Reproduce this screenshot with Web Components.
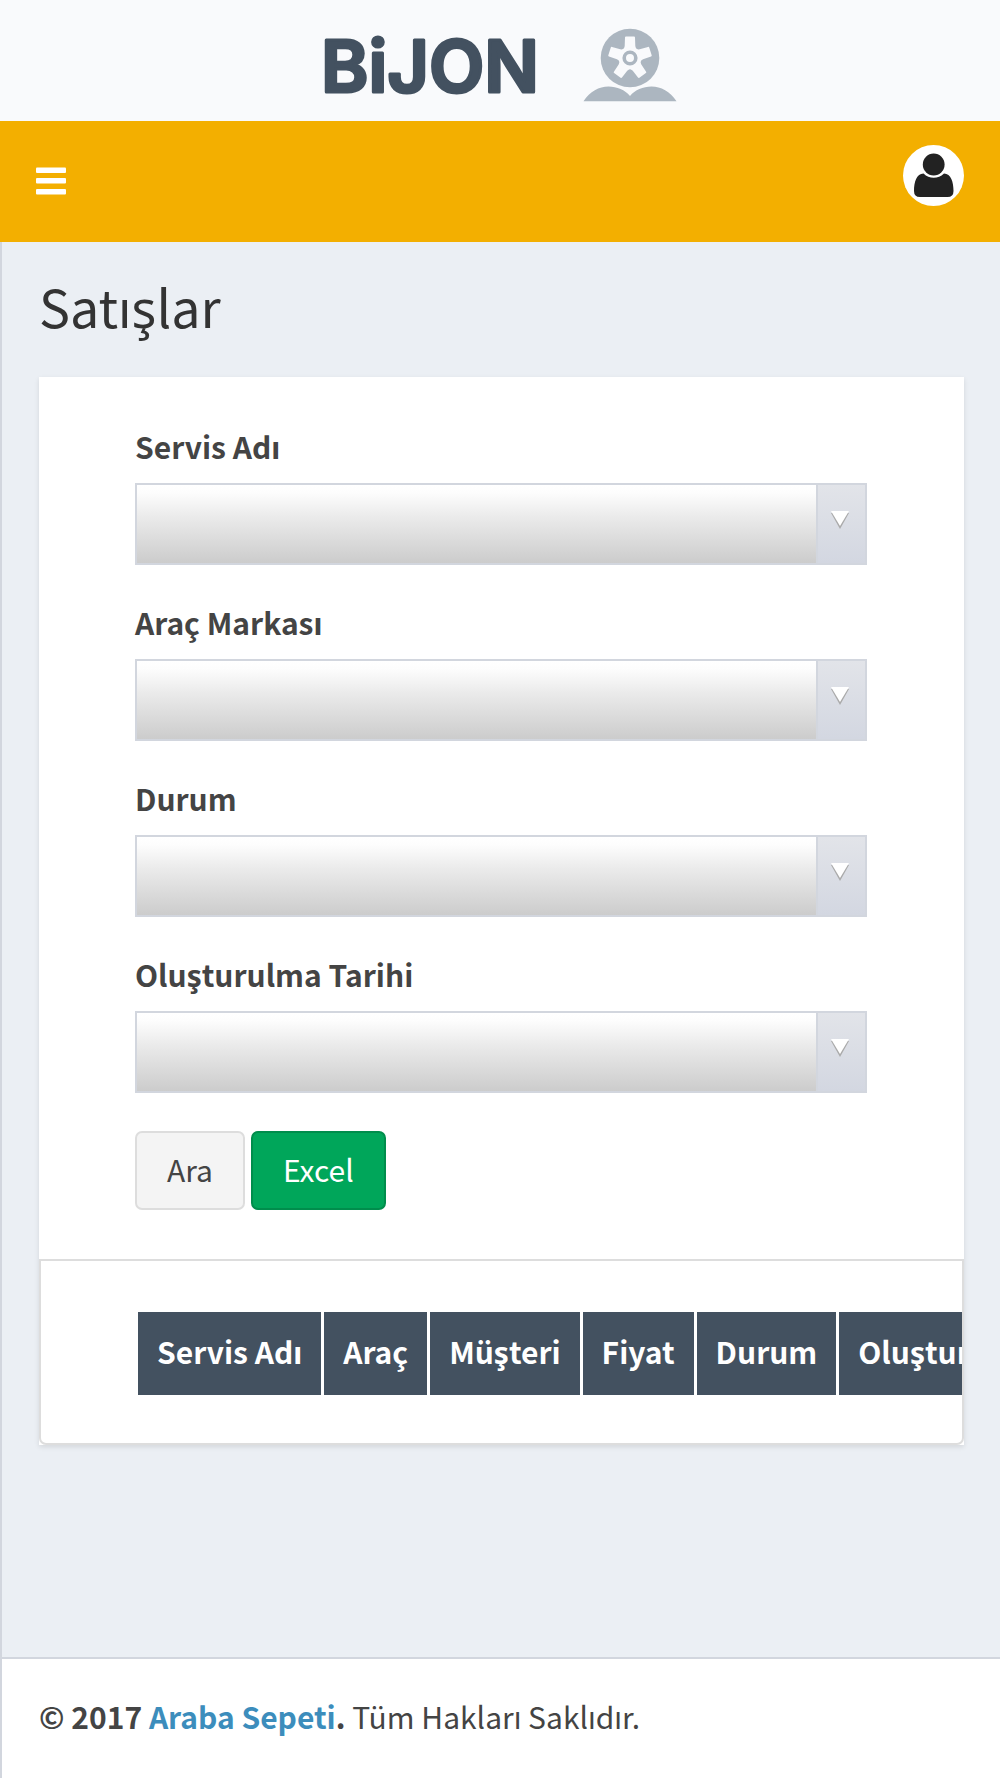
<!DOCTYPE html>
<html lang="tr">
<head>
<meta charset="utf-8">
<meta name="viewport" content="width=device-width, initial-scale=1">
<title>Satışlar</title>
<style>
  html, body { margin: 0; }
  body {
    --line: #d2d6de;
    --slate: #435160;
    font: 30px/43px "Noto Sans CJK SC", "Noto Sans", sans-serif;
    color: #444;
    background: #ebeff4;
  }
</style>
</head>
<body>
<sales-app></sales-app>
<script>
const define = (name, html, setup) => customElements.define(name, class extends HTMLElement {
  constructor() {
    super();
    const root = this.attachShadow({ mode: "open" });
    root.innerHTML = "<style>*{box-sizing:border-box}:host{display:block;box-sizing:border-box}</style>" + html;
    if (setup) setup(this, root);
  }
});

define("brand-logo", `
  <style>
    :host { background: #f9fafc; }
    a { display: flex; justify-content: center; height: 121px; }
    svg { width: 360px; height: 121px; display: block; }
    text { font: 600 72px Inter, sans-serif; fill: var(--slate); stroke: var(--slate); stroke-width: 3px; stroke-linejoin: round; }
  </style>
  <a href="#" aria-label="BiJON">
    <svg viewBox="320 0 360 121">
      <text x="321" y="92">BiJON</text>
      <g fill="#acb6c0">
        <circle cx="630" cy="58" r="29.3"/>
        <path d="M583.500 101.300C590 91.500 599 86.500 608.500 86.500C617 86.500 625 90 630 96C635 90 643 86.500 651.500 86.500C661 86.500 670 91.500 676.500 101.300Z"/>
      </g>
      <g fill="#f9fafc">
        <path id="spoke" d="M630 58L619 50Q624 51 624.700 46L625 37.500Q625 36.500 626 36.500H634Q635 36.500 635 37.500L635.300 46Q636 51 641 50Z"/>
        <use href="#spoke" transform="rotate(72 630 58)"/>
        <use href="#spoke" transform="rotate(144 630 58)"/>
        <use href="#spoke" transform="rotate(216 630 58)"/>
        <use href="#spoke" transform="rotate(288 630 58)"/>
        <circle cx="630" cy="58" r="10"/>
      </g>
      <circle cx="630" cy="58" r="5.800" fill="none" stroke="#acb6c0" stroke-width="3.600"/>
    </svg>
  </a>`);

define("top-bar", `
  <style>
    :host { background: #f3af00; height: 121px; }
    nav { display: flex; justify-content: space-between; align-items: flex-start; padding: 24px 36px; }
    button { border: 0; padding: 0; background: none; cursor: pointer; }
    svg { display: block; }
    .menu { padding: 22px 0; }
  </style>
  <nav>
    <button class="menu" aria-label="Menü">
      <svg width="30" height="28" fill="#fff"><rect y="0.500" width="30" height="5.500" rx="1"/><rect y="11" width="30" height="5.500" rx="1"/><rect y="22" width="30" height="5.500" rx="1"/></svg>
    </button>
    <button aria-label="Hesap">
      <svg width="61" height="61" viewBox="0 0 61 61"><circle cx="30.500" cy="30.500" r="30.500" fill="#fff"/>
      <g fill="#222"><circle cx="30.700" cy="19.500" r="10.900"/>
      <path d="M20.500 28.500Q25 32.800 30.700 32.800T41 28.500C48 28.500 50.500 37 50.500 46Q50.500 52 44.500 52H17Q11 52 11 46C11 37 13.500 28.500 20.500 28.500Z"/></g></svg>
    </button>
  </nav>`);

define("select-field", `
  <style>
    :host { margin-bottom: 36px; }
    label { display: block; font-weight: 700; margin-bottom: 15px; }
    .control { display: grid; grid-template-columns: 1fr 51px; }
    select {
      grid-area: 1 / 1 / 2 / 3; appearance: none; width: 100%; height: 82px; margin: 0;
      padding: 0 60px 0 12px; border: 2px solid var(--line); border-radius: 0;
      font: inherit; color: inherit; background: linear-gradient(#fff, #fdfdfd 10%, #ebebeb 40%, #ccc);
    }
    .arrow {
      grid-area: 1 / 2; display: flex; align-items: flex-start; justify-content: center;
      padding-top: 26px; border: 2px solid var(--line); pointer-events: none;
      background: linear-gradient(#e2e4e9, #d3d7e1);
    }
    svg { display: block; margin-right: 4px; }
  </style>
  <label for="choice"><slot></slot></label>
  <div class="control">
    <select id="choice"><option></option></select>
    <span class="arrow"><svg width="18" height="18"><path d="M0 2H18L9 18Z" fill="#aaa"/><path d="M0 0H18L9 15Z" fill="#fff"/></svg></span>
  </div>`);

define("action-button", `
  <style>
    :host { display: inline-block; }
    button {
      font: inherit; color: #444; background: #f4f4f4; border: 2px solid #ddd;
      border-radius: 7px; padding: 15px 30px 17px; cursor: pointer; display: block;
    }
    :host([kind="success"]) button { color: #fff; background: #00a65a; border-color: #008d4c; }
  </style>
  <button type="button"><slot></slot></button>`);

define("filter-form", `
  <style>
    :host { padding: 48px 97px 49px 96px; }
    .actions { display: flex; gap: 6px; padding-top: 2px; }
  </style>
  <form>
    <select-field>Servis Adı</select-field>
    <select-field>Araç Markası</select-field>
    <select-field>Durum</select-field>
    <select-field>Oluşturulma Tarihi</select-field>
    <div class="actions">
      <action-button>Ara</action-button>
      <action-button kind="success">Excel</action-button>
    </div>
  </form>`);

define("sales-table", `
  <style>
    :host { border: 2px solid #ddd; border-radius: 0 0 7px 7px; padding: 48px 0 45px 94px; overflow: hidden; }
    table { border-collapse: separate; border-spacing: 3px; white-space: nowrap; }
    th { background: var(--slate); color: #fff; font-weight: 700; padding: 18px 19px 22px; }
  </style>
  <table><thead><tr></tr></thead></table>`,
  (host, root) => {
    const row = root.querySelector("tr");
    for (const title of ["Servis Adı", "Araç", "Müşteri", "Fiyat", "Durum", "Oluşturulma Tarihi"]) {
      const th = document.createElement("th");
      th.scope = "col";
      th.textContent = title;
      row.append(th);
    }
  });

define("page-footer", `
  <style>
    :host { background: #fff; border-top: 2px solid var(--line); padding: 36px 37px 40px; }
    a { color: #3c8dbc; text-decoration: none; }
  </style>
  <footer><strong>© 2017 <a href="#">Araba Sepeti</a>.</strong> Tüm Hakları Saklıdır.</footer>`);

define("sales-app", `
  <style>
    :host { display: flex; flex-direction: column; min-height: 100vh; }
    .body { flex: 1; display: flex; flex-direction: column; border-left: 2px solid var(--line); }
    main { flex: 1; padding: 32px 36px 48px 37px; }
    h1 { margin: 0 0 39px; font-size: 52px; line-height: 64px; font-weight: 400; color: #333; }
    .card { background: #fff; box-shadow: 0 2px 5px rgba(0,0,0,.1); }
  </style>
  <brand-logo></brand-logo>
  <top-bar></top-bar>
  <div class="body">
    <main>
      <h1>Satışlar</h1>
      <div class="card">
        <filter-form></filter-form>
        <sales-table></sales-table>
      </div>
    </main>
    <page-footer></page-footer>
  </div>`);
</script>
</body>
</html>
